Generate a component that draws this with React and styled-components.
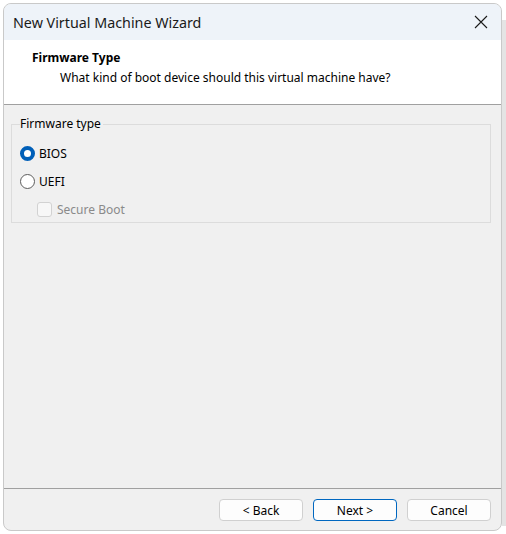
import React from "react";
import styled, { createGlobalStyle } from "styled-components";

const Global = createGlobalStyle`
  html, body {
    margin: 0;
    background: #ffffff;
  }
  body {
    font-family: "Noto Sans", "Open Sans", sans-serif;
    font-size: 12px;
    color: #000;
  }
`;

const Page = styled.div`
  display: flex;
  padding: 3px 0 0 3px;
`;

const Shade = styled.div`
  width: 4px;
  margin-top: 17px;
  height: 506px;
  background: #e4e4e4;
`;

const Window = styled.div`
  width: 499px;
  height: 528px;
  box-sizing: border-box;
  border: 1px solid #c9c9c9;
  border-radius: 8px;
  overflow: hidden;
  display: flex;
  flex-direction: column;
  background: #f0f0f0;
`;

const TitleBar = styled.div`
  height: 36px;
  display: flex;
  align-items: center;
  justify-content: space-between;
  padding: 0 13px 0 9px;
  background: #eef3f9;
  font-size: 14.3px;
  color: #1a1a1a;
`;

const Header = styled.div`
  background: #ffffff;
  border-bottom: 1px solid #a0a0a0;
  padding: 9px 0 0 28px;
  box-sizing: border-box;
  height: 65px;
`;

const Heading = styled.div`
  font-weight: bold;
  line-height: 17px;
  color: #000;
`;

const SubHeading = styled.div`
  padding-left: 28px;
  line-height: 17px;
  margin-top: 3px;
`;

const Body = styled.div`
  flex: 1;
  padding: 12px 10px 0 7px;
`;

const Group = styled.fieldset`
  margin: 0;
  padding: 8px 8px 4px 8px;
  border: 1px solid #dcdcdc;
  height: 106px;
  box-sizing: border-box;
  legend {
    padding: 0 2px 0 0;
    margin-left: 0;
    color: #000;
    line-height: 14px;
  }
`;

const Option = styled.label`
  display: flex;
  align-items: center;
  height: 28px;
  gap: 4px;
  padding-left: ${(p) => p.$indent || 0}px;
  color: ${(p) => (p.$disabled ? "#8a8a8a" : "#000")};
`;

const Radio = styled.span`
  width: 15px;
  height: 15px;
  box-sizing: border-box;
  border-radius: 50%;
  border: ${(p) => (p.$on ? "4.5px solid #005fb8" : "1px solid #5c5c5c")};
  background: #ffffff;
`;

const Check = styled.span`
  width: 15px;
  height: 15px;
  box-sizing: border-box;
  border-radius: 3px;
  border: 1px solid #d2d2d2;
  background: #f7f7f7;
  margin-right: 1px;
`;

const Footer = styled.div`
  border-top: 1px solid #a0a0a0;
  display: flex;
  justify-content: flex-end;
  align-items: flex-start;
  gap: 10px;
  padding: 10px 10px 0 0;
  box-sizing: border-box;
  height: 42px;
`;

const Button = styled.button`
  width: 84px;
  height: 22px;
  box-sizing: border-box;
  font-family: inherit;
  font-size: 12px;
  color: #000;
  background: #fdfdfd;
  border: 1px solid ${(p) => (p.$primary ? "#0067c0" : "#d0d0d0")};
  border-radius: 4px;
  padding: 0;
`;

const CloseIcon = () => (
  <svg width="14" height="14" viewBox="0 0 14 14">
    <path d="M1 1 L13 13 M13 1 L1 13" stroke="#1a1a1a" strokeWidth="1.1" fill="none" />
  </svg>
);

export default function App() {
  return (
    <>
      <Global />
      <Page>
        <Window>
          <TitleBar>
            <span>New Virtual Machine Wizard</span>
            <CloseIcon />
          </TitleBar>
          <Header>
            <Heading>Firmware Type</Heading>
            <SubHeading>What kind of boot device should this virtual machine have?</SubHeading>
          </Header>
          <Body>
            <Group>
              <legend>Firmware type</legend>
              <Option>
                <Radio $on />
                BIOS
              </Option>
              <Option>
                <Radio />
                UEFI
              </Option>
              <Option $indent={17} $disabled>
                <Check />
                Secure Boot
              </Option>
            </Group>
          </Body>
          <Footer>
            <Button>&lt; Back</Button>
            <Button $primary>Next &gt;</Button>
            <Button>Cancel</Button>
          </Footer>
        </Window>
        <Shade />
      </Page>
    </>
  );
}
